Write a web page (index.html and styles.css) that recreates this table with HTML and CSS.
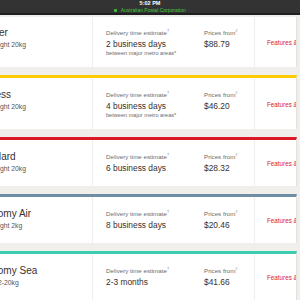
FILE: index.html
```html
<!DOCTYPE html>
<html>
<head>
<meta charset="utf-8">
<link rel="stylesheet" href="styles.css">
</head>
<body>
<div class="topbar">
  <div class="time">5:02 PM</div>
  <div class="site"><span class="dot"></span>Australian Postal Corporation</div>
</div>
<div class="list">
  <div class="card first">
    <div class="col name"><div class="title">Courier</div><div class="weight">Max weight 20kg</div></div>
    <div class="col est"><div class="label">Delivery time estimate<sup>†</sup></div><div class="value">2 business days</div><div class="note">between major metro areas*</div></div>
    <div class="col price"><div class="label">Prices from<sup>#</sup></div><div class="value">$88.79</div></div>
    <div class="col feat"><span class="link">Features &amp; conditions</span></div>
  </div>
  <div class="card yellow">
    <div class="col name"><div class="title">Express</div><div class="weight">Max weight 20kg</div></div>
    <div class="col est"><div class="label">Delivery time estimate<sup>†</sup></div><div class="value">4 business days</div><div class="note">between major metro areas*</div></div>
    <div class="col price"><div class="label">Prices from<sup>#</sup></div><div class="value">$46.20</div></div>
    <div class="col feat"><span class="link">Features &amp; conditions</span></div>
  </div>
  <div class="card red">
    <div class="col name"><div class="title">Standard</div><div class="weight">Max weight 20kg</div></div>
    <div class="col est"><div class="label">Delivery time estimate<sup>†</sup></div><div class="value">6 business days</div></div>
    <div class="col price"><div class="label">Prices from<sup>#</sup></div><div class="value">$28.32</div></div>
    <div class="col feat"><span class="link">Features &amp; conditions</span></div>
  </div>
  <div class="card blue">
    <div class="col name"><div class="title">Economy Air</div><div class="weight">Max weight 2kg</div></div>
    <div class="col est"><div class="label">Delivery time estimate<sup>†</sup></div><div class="value">8 business days</div></div>
    <div class="col price"><div class="label">Prices from<sup>#</sup></div><div class="value">$20.46</div></div>
    <div class="col feat"><span class="link">Features &amp; conditions</span></div>
  </div>
  <div class="card teal">
    <div class="col name"><div class="title">Economy Sea</div><div class="weight">Weight 2-20kg</div></div>
    <div class="col est"><div class="label">Delivery time estimate<sup>†</sup></div><div class="value">2-3 months</div></div>
    <div class="col price"><div class="label">Prices from<sup>#</sup></div><div class="value">$41.66</div></div>
    <div class="col feat"><span class="link">Features &amp; conditions</span></div>
  </div>
</div>
</body>
</html>
```
FILE: styles.css
```css
html, body {
  margin: 0;
  padding: 0;
}
body {
  width: 300px;
  height: 300px;
  overflow: hidden;
  background: #f0efeb;
  font-family: "Liberation Sans", Arial, sans-serif;
  color: #382f2d;
}
.topbar {
  height: 13px;
  background: #333333;
  border-bottom: 2px solid #1f1f1f;
  display: flex;
  flex-direction: column;
  align-items: center;
  color: #fff;
  line-height: 1;
}
.time {
  font-size: 5.5px;
  font-weight: bold;
  margin-top: 1px;
}
.site {
  font-size: 5px;
  color: #43c43a;
  margin-top: 1.5px;
  display: flex;
  align-items: center;
}
.dot {
  width: 2.5px;
  height: 2.5px;
  border-radius: 50%;
  background: #43c43a;
  margin-right: 4px;
}
.list {
  margin-left: -40px;
  width: 337px;
  padding-top: 2px;
  display: flex;
  flex-direction: column;
  gap: 8px;
}
.card {
  background: #fff;
  display: grid;
  grid-template-columns: 133px 111px 50px 1fr;
  border-top: 3px solid transparent;
  border-right: 1px solid #e2e1dd;
}
.card.first { border-top: none; }
.card.first .col { padding-top: 11px; }
.card.yellow { border-top-color: #ffcc00; }
.card.red { border-top-color: #dc1928; }
.card.blue { border-top-color: #6e8ea3; }
.card.teal { border-top-color: #3ccdb0; }
.col {
  padding: 12px 0 11px 0;
}
.name {
  padding-left: 15px;
  border-right: 1px solid #efeeea;
}
.est { padding-left: 13px; }
.feat {
  padding-left: 12px;
  border-left: 1px solid #efeeea;
  display: flex;
  align-items: center;
  white-space: nowrap;
  overflow: hidden;
}
.title {
  font-size: 10px;
  line-height: 10px;
  white-space: nowrap;
}
.weight {
  font-size: 6.8px;
  line-height: 13px;
  color: #555;
  white-space: nowrap;
}
.label {
  font-size: 6.2px;
  line-height: 10px;
  color: #6b6b6b;
  white-space: nowrap;
}
sup {
  font-size: 4px;
  vertical-align: 3px;
  line-height: 0;
}
.value {
  font-size: 8.4px;
  line-height: 12px;
  white-space: nowrap;
}
.note {
  font-size: 5.6px;
  line-height: 6px;
  color: #6b6b6b;
  white-space: nowrap;
}
.link {
  font-size: 6.3px;
  color: #dc1928;
}
```
